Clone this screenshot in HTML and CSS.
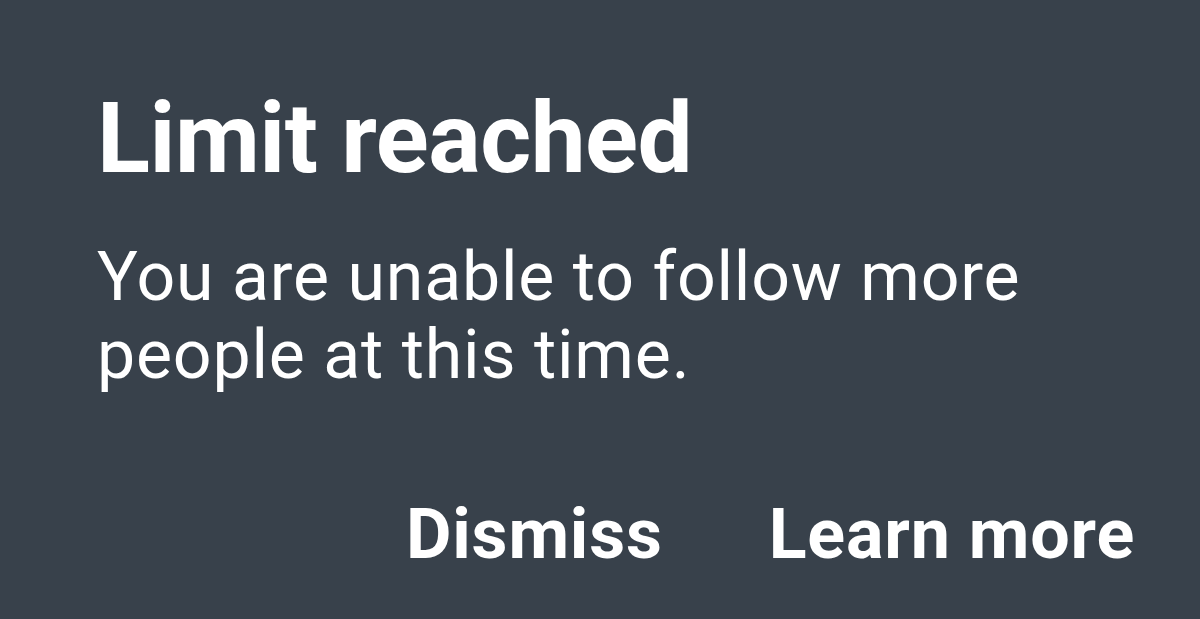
FILE: index.html
```html
<!DOCTYPE html>
<html lang="en">
<head>
  <meta charset="UTF-8">
  <title>Limit reached</title>
  <link rel="stylesheet" href="styles.css">
</head>
<body>
  <div class="dialog">
    <h1 class="dialog-title">Limit reached</h1>
    <p class="dialog-text">You are unable to follow more people at this time.</p>
    <div class="dialog-actions">
      <button class="action">Dismiss</button>
      <button class="action">Learn more</button>
    </div>
  </div>
</body>
</html>
```

FILE: styles.css
```css
* { margin: 0; padding: 0; box-sizing: border-box; }
html, body { height: 100%; }
body { background: #38414b; color: #fff; font-family: Roboto, "Open Sans", sans-serif; }
.dialog { height: 100%; padding: 84px 65px 0 97px; display: flex; flex-direction: column; }
.dialog-title { font-size: 98px; font-weight: 700; line-height: 110px; letter-spacing: -0.5px; }
.dialog-text { margin-top: 44px; font-size: 68px; font-weight: 400; line-height: 78px; letter-spacing: 0.8px; max-width: 980px; }
.dialog-actions { margin-top: 100px; display: flex; justify-content: flex-end; gap: 106px; }
.action { background: none; border: none; color: #fff; font-family: inherit; font-size: 70px; font-weight: 700; line-height: 80px; letter-spacing: 0.8px; cursor: pointer; }
```
